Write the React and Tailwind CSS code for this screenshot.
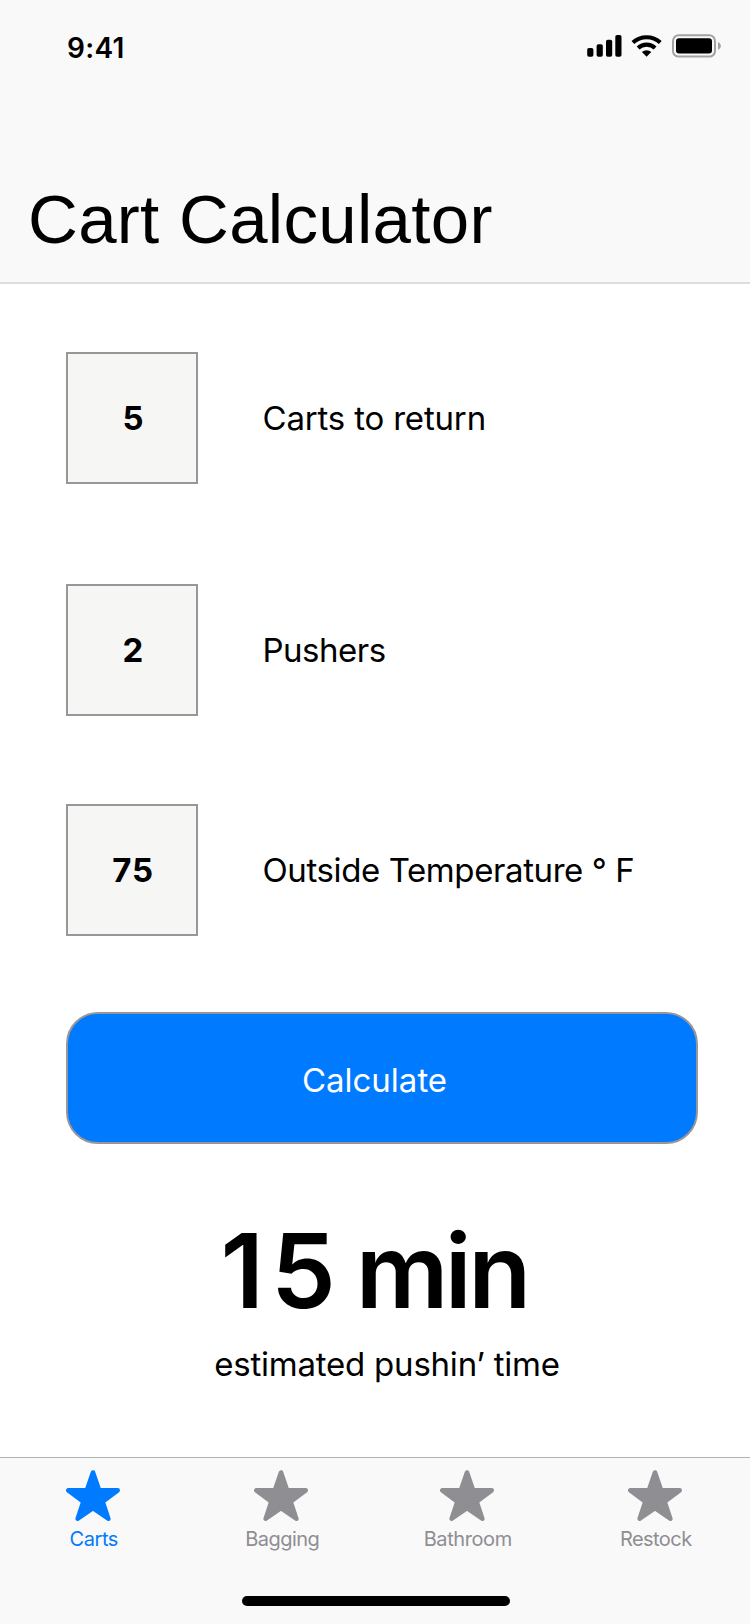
const fields = [
  { value: "5", label: "Carts to return", row: "mt-[68px]", digits: "pl-[2px]", tracking: "tracking-[-0.18px]" },
  { value: "2", label: "Pushers", row: "mt-[100px]", digits: "pl-[2px]", tracking: "tracking-[-0.5px]" },
  { value: "75", label: "Outside Temperature ° F", row: "mt-[88px]", digits: "pl-[2px] tracking-[0.8px]", tracking: "tracking-[-0.4px]" },
];

const tabs = [
  { label: "Carts", active: true, cell: "pr-[2px]", text: "pl-[2px] tracking-[-0.45px]" },
  { label: "Bagging", cell: "pr-0", text: "pl-[2px] tracking-[-0.55px]" },
  { label: "Bathroom", cell: "pr-[4px]", text: "pl-[2px] tracking-[-0.41px]" },
  { label: "Restock", cell: "pr-[3px]", text: "pl-[2px] tracking-[-0.55px]" },
];

function StarIcon() {
  return (
    <svg width="54" height="51" viewBox="0 0 54 51" fill="currentColor" stroke="currentColor" strokeWidth="4.6" strokeLinejoin="round">
      <path d="M27 2.5 L33.1 20.3 L51.7 20.3 L36.6 31.6 L42.3 48.7 L27 38.1 L11.7 48.7 L17.4 31.6 L2.3 20.3 L20.9 20.3 Z" />
    </svg>
  );
}

function StatusIcons() {
  return (
    <svg width="136" height="24" viewBox="0 0 136 24">
      <rect x="0.2" y="14" width="6.2" height="8.7" rx="1.8" />
      <rect x="9.6" y="10.3" width="6.2" height="12.4" rx="1.8" />
      <rect x="19" y="5.7" width="6.2" height="17" rx="1.8" />
      <rect x="28.3" y="1" width="6.2" height="21.7" rx="1.8" />
      <g fill="none" stroke="#000" strokeWidth="4.1">
        <path d="M45.9 8.6 A20.2 20.2 0 0 1 73.3 8.6" />
        <path d="M51.1 13.9 A12.6 12.6 0 0 1 68.1 13.9" />
      </g>
      <path d="M54.9 18.1 A6.9 6.9 0 0 1 64.3 18.1 L59.6 22.8 Z" />
      <rect x="86" y="1.3" width="42" height="21.3" rx="5.6" fill="none" stroke="#a3a3a3" strokeWidth="2" />
      <rect x="89" y="4.3" width="36" height="15.3" rx="3" />
      <path d="M131 8 C134.8 9.6 134.8 14.2 131 15.8 Z" fill="#a3a3a3" />
    </svg>
  );
}

export default function App() {
  return (
    <div className="flex h-[1624px] w-[750px] flex-col bg-white font-['Inter',sans-serif] text-black">
      <header className="flex h-[284px] flex-col border-b-2 border-[#dddddd] bg-[#f9f9f9]">
        <div className="flex items-start justify-between pr-[27px] pl-[67px] pt-[34px]">
          <time className="text-[28px] leading-[29px] font-semibold tracking-[0.3px]">9:41</time>
          <StatusIcons />
        </div>
        <h1 className="mt-[113px] pl-[28px] font-['Liberation_Sans',sans-serif] text-[69px] leading-[88px] tracking-[0.3px]">
          Cart Calculator
        </h1>
      </header>

      <main className="flex flex-1 flex-col">
        {fields.map((f) => (
          <label key={f.label} className={`flex h-[132px] items-center pl-[66px] ${f.row}`}>
            <span className={`flex size-[132px] items-center justify-center border-2 border-[#979797] bg-[#f6f6f4] text-[33px] leading-[34px] font-bold ${f.digits}`}>
              {f.value}
            </span>
            <span className={`pl-[64.5px] text-[33px] leading-[34px] ${f.tracking}`}>{f.label}</span>
          </label>
        ))}

        <button className="mt-[76px] ml-[66px] flex h-[132px] w-[632px] items-center justify-center rounded-[32px] border-2 border-[#979797] bg-[#007aff] pt-[4px] pr-[15px] text-[33px] leading-[34px] text-white">
          Calculate
        </button>

        <p className="mt-[77px] pr-[2px] text-center text-[103px] leading-[100px] font-semibold">
          <span className="tracking-[7px]">1</span>5<span className="tracking-[-6px]"> </span>
          <span className="tracking-[-3.6px]">min</span>
        </p>
        <p className="mt-[26px] pl-[24px] text-center text-[33px] leading-[34px] tracking-[-0.22px]">
          estimated pushin’ time
        </p>
      </main>

      <nav className="flex h-[167px] flex-col border-t border-[#b2b2b2] bg-[#f9f9f9]">
        <div className="grid h-[138px] grid-cols-4 pt-3">
          {tabs.map((t) => (
            <a key={t.label} className={`flex flex-col items-center ${t.cell} ${t.active ? "text-[#007aff]" : "text-[#8e8e93]"}`}>
              <StarIcon />
              <span className={`mt-[6px] text-[20px] leading-6 ${t.text}`}>{t.label}</span>
            </a>
          ))}
        </div>
        <div className="ml-[242px] h-[10px] w-[268px] rounded-full bg-black" />
      </nav>
    </div>
  );
}
